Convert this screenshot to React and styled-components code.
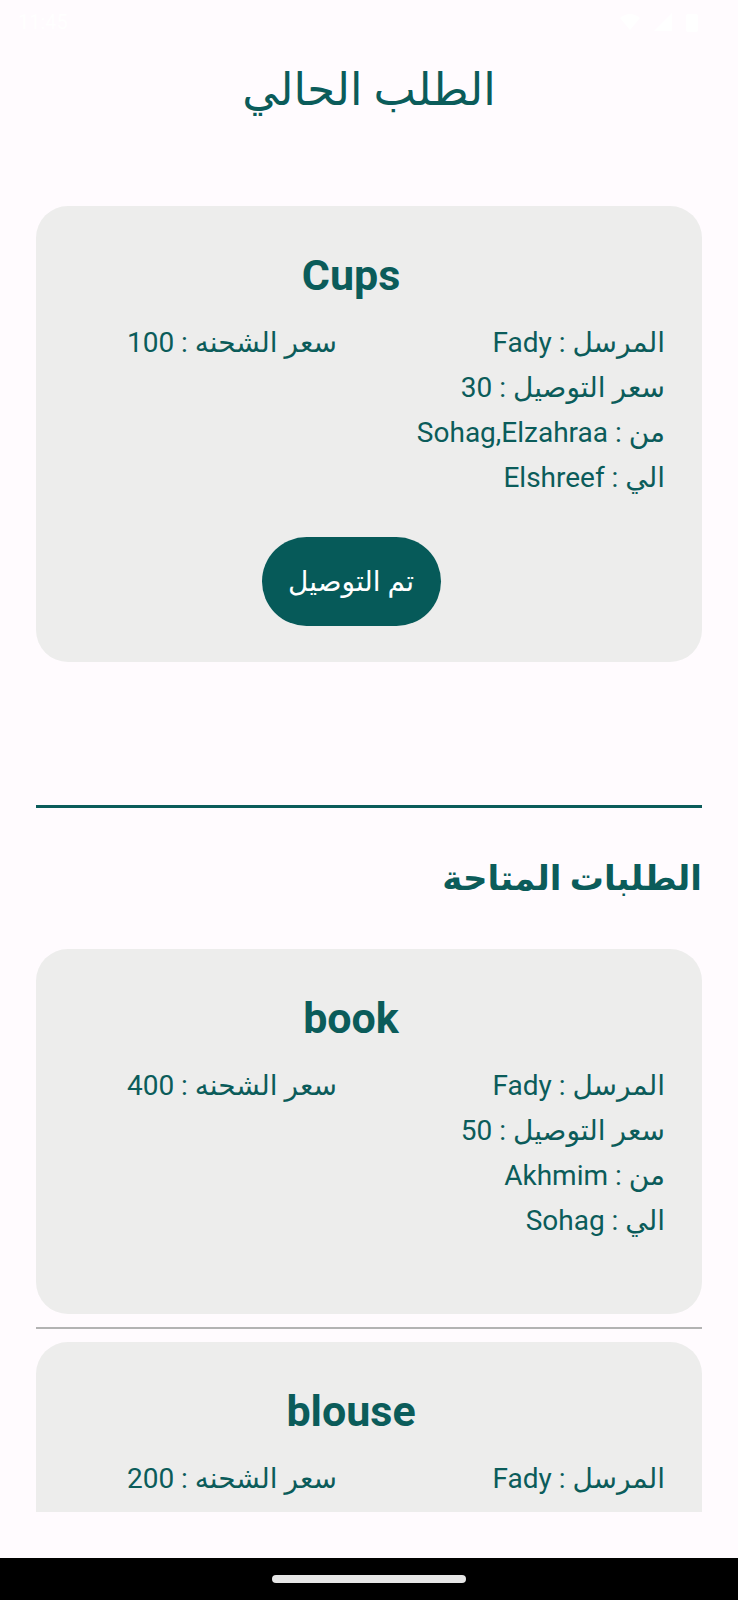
import React from "react";
import styled, { createGlobalStyle } from "styled-components";

const Global = createGlobalStyle`
  html, body { margin: 0; padding: 0; background: #fffbfe; }
  * { box-sizing: border-box; }
`;

const TEAL = "#0b5c5a";

const Screen = styled.div`
  width: 738px;
  height: 1600px;
  display: flex;
  flex-direction: column;
  background: #fffbfe;
  font-family: Roboto, "Noto Sans", "DejaVu Sans", sans-serif;
  color: ${TEAL};
  overflow: hidden;
`;

const StatusBar = styled.div`
  height: 44px;
  flex: none;
  display: flex;
  align-items: center;
  justify-content: space-between;
  padding: 0 40px 0 18px;
  color: #ffffff;
  font-size: 20px;
`;

const StatusGroup = styled.div`
  display: flex;
  align-items: center;
  gap: 14px;
`;

const Scroll = styled.div`
  flex: 1;
  overflow: hidden;
  direction: rtl;
  padding: 0 36px;
`;

const BottomGap = styled.div`
  height: 46px;
  flex: none;
`;

const NavBar = styled.div`
  height: 42px;
  flex: none;
  background: #000;
  display: flex;
  align-items: center;
  justify-content: center;
`;

const Pill = styled.div`
  width: 194px;
  height: 8px;
  border-radius: 4px;
  background: #e6e6e6;
`;

const PageTitle = styled.h1`
  margin: 18px 0 0;
  text-align: center;
  font-size: 45px;
  line-height: 56px;
  font-weight: 400;
`;

const SectionTitle = styled.h2`
  margin: 0;
  text-align: right;
  font-size: 34px;
  line-height: 50px;
  font-weight: 700;
`;

const Card = styled.div`
  background: #ededec;
  border-radius: 32px;
  padding: 44px 37px 36px 1px;
  margin-top: ${(p) => p.$top || 0}px;
`;

const CardTitle = styled.div`
  direction: ltr;
  text-align: center;
  font-size: 43px;
  line-height: 50px;
  font-weight: 700;
`;

const Details = styled.div`
  display: grid;
  grid-template-columns: 314px 314px;
  margin-top: 20px;
  font-size: 28px;
  line-height: 45px;
`;

const Column = styled.div`
  display: flex;
  flex-direction: column;
  padding-inline-start: ${(p) => p.$inset || 0}px;
  text-align: right;
`;

const Line = styled.div`
  white-space: nowrap;
`;

const Footer = styled.div`
  padding-top: ${(p) => (p.$empty ? 35 : 37)}px;
  display: flex;
  justify-content: center;
`;

const ActionButton = styled.button`
  width: 179px;
  height: 89px;
  border: none;
  border-radius: 45px;
  background: #065a59;
  color: #ffffff;
  font-family: inherit;
  font-size: 28px;
  cursor: pointer;
`;

const ThickRule = styled.div`
  height: 3px;
  background: ${TEAL};
  margin: ${(p) => p.$mt}px 0 ${(p) => p.$mb}px;
`;

const ThinRule = styled.div`
  height: 2px;
  background: #b3b3b3;
  margin: 13px 0 13px;
`;

function OrderCard({ name, sender, delivery, from, to, shipping, action, top }) {
  return (
    <Card $top={top}>
      <CardTitle>{name}</CardTitle>
      <Details>
        <Column>
          <Line>المرسل : {sender}</Line>
          <Line>سعر التوصيل : {delivery}</Line>
          <Line>من : {from}</Line>
          <Line>الي : {to}</Line>
        </Column>
        <Column $inset={14}>
          <Line>سعر الشحنه : {shipping}</Line>
        </Column>
      </Details>
      <Footer $empty={!action}>{action && <ActionButton>{action}</ActionButton>}</Footer>
    </Card>
  );
}

function WifiIcon() {
  return (
    <svg width="20" height="18" viewBox="0 0 20 18">
      <path d="M10 17 L0 5 Q10 -3 20 5 Z" fill="#fff" />
    </svg>
  );
}

export default function App() {
  return (
    <>
      <Global />
      <Screen>
        <StatusBar>
          <StatusGroup>
            <span>11:45</span>
          </StatusGroup>
          <StatusGroup>
            <WifiIcon />
            <svg width="18" height="18" viewBox="0 0 18 18">
              <path d="M18 0 L18 18 L0 18 Z" fill="#fff" />
            </svg>
            <svg width="12" height="20" viewBox="0 0 12 20">
              <rect x="0" y="2" width="12" height="18" rx="2" fill="#fff" />
            </svg>
          </StatusGroup>
        </StatusBar>
        <Scroll>
          <PageTitle>الطلب الحالي</PageTitle>
          <OrderCard
            top={88}
            name="Cups"
            sender="Fady"
            delivery="30"
            from="Sohag,Elzahraa"
            to="Elshreef"
            shipping="100"
            action="تم التوصيل"
          />
          <ThickRule $mt={143} $mb={45} />
          <SectionTitle>الطلبات المتاحة</SectionTitle>
          <OrderCard
            top={46}
            name="book"
            sender="Fady"
            delivery="50"
            from="Akhmim"
            to="Sohag"
            shipping="400"
          />
          <ThinRule />
          <OrderCard
            name="blouse"
            sender="Fady"
            delivery="20"
            from="Sohag"
            to="Akhmim"
            shipping="200"
          />
        </Scroll>
        <BottomGap />
        <NavBar>
          <Pill />
        </NavBar>
      </Screen>
    </>
  );
}
